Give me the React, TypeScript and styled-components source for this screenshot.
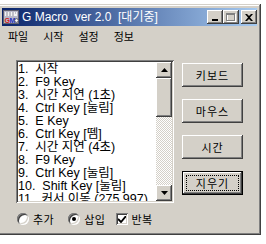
import React from "react";
import styled, { createGlobalStyle, css } from "styled-components";

const GlobalStyle = createGlobalStyle`
  html, body { margin: 0; padding: 0; background: #ffffff; }
  body { font-family: "Liberation Sans", "Noto Sans CJK KR", sans-serif; }
`;

const raised = css`
  box-shadow: inset -1px -1px #404040, inset 1px 1px #ffffff,
    inset -2px -2px #808080, inset 2px 2px #d4d0c8;
`;

const Window = styled.div`
  box-sizing: border-box;
  width: 263px;
  height: 231px;
  margin: 4px 0 0 -2px;
  padding: 4px;
  background: #d4d0c8;
  box-shadow: inset -1px -1px #404040, inset 1px 1px #d4d0c8,
    inset -2px -2px #808080, inset 2px 2px #ffffff;
  display: flex;
  flex-direction: column;
`;

const TitleBar = styled.div`
  height: 18px;
  display: flex;
  align-items: center;
  padding: 0 0 0 1px;
  background: linear-gradient(to right, #0a246a, #a6caf0);
`;

const TitleText = styled.span`
  flex: 1;
  margin-left: 3px;
  color: #ffffff;
  font-size: 12px;
  line-height: 18px;
  white-space: pre;
`;

const Controls = styled.div`
  display: flex;
  align-items: center;
`;

const TitleButton = styled.div<{ $gap?: boolean }>`
  width: 16px;
  height: 14px;
  margin-left: ${(p) => (p.$gap ? "2px" : "0")};
  background: #d4d0c8;
  ${raised};
  display: flex;
  align-items: center;
  justify-content: center;
`;

const MenuBar = styled.div`
  height: 19px;
  display: flex;
  align-items: center;
  gap: 15px;
  padding-left: 6px;
`;

const MenuItem = styled.span`
  font-family: "Noto Sans CJK KR", sans-serif;
  font-size: 11px;
  color: #000;
`;

const Client = styled.div`
  flex: 1;
  display: flex;
  flex-direction: column;
  padding: 15px 0 0 14px;
`;

const MainRow = styled.div`
  display: flex;
  gap: 8px;
`;

const ListBox = styled.div`
  box-sizing: border-box;
  width: 158px;
  height: 143px;
  padding: 2px;
  background: #ffffff;
  box-shadow: inset 1px 1px #808080, inset -1px -1px #ffffff,
    inset 2px 2px #404040, inset -2px -2px #d4d0c8;
  display: flex;
`;

const Items = styled.div`
  flex: 1;
  overflow: hidden;
  padding-top: 1px;
`;

const Item = styled.div`
  font-size: 12.5px;
  line-height: 13px;
  height: 13px;
  color: #000;
  white-space: pre;
`;

const ScrollBar = styled.div`
  width: 16px;
  display: flex;
  flex-direction: column;
`;

const ScrollButton = styled.div`
  width: 16px;
  height: 16px;
  background: #d4d0c8;
  ${raised};
  display: flex;
  align-items: center;
  justify-content: center;
`;

const Thumb = styled.div`
  width: 16px;
  height: 39px;
  background: #d4d0c8;
  ${raised};
`;

const Track = styled.div`
  flex: 1;
  background-color: #ffffff;
  background-image: conic-gradient(#d4d0c8 25%, #ffffff 0 50%, #d4d0c8 0 75%, #ffffff 0);
  background-size: 2px 2px;
`;

const ButtonColumn = styled.div`
  display: flex;
  flex-direction: column;
  gap: 12px;
  padding-top: 3px;
`;

const PushButton = styled.div<{ $default?: boolean }>`
  position: relative;
  box-sizing: border-box;
  width: 61px;
  height: 24px;
  background: #d4d0c8;
  font-family: "Noto Sans CJK KR", sans-serif;
  font-size: 11px;
  color: #000;
  display: flex;
  align-items: center;
  justify-content: center;
  letter-spacing: 1px;
  ${(p) =>
    p.$default
      ? css`
          border: 1px solid #000;
          box-shadow: inset -1px -1px #404040, inset 1px 1px #ffffff,
            inset -2px -2px #808080, inset 2px 2px #d4d0c8;
        `
      : raised};
`;

const FocusRing = styled.span`
  position: absolute;
  inset: 3px;
  border: 1px dotted #000;
`;

const BottomRow = styled.div`
  display: flex;
  align-items: center;
  height: 16px;
  margin-top: 8px;
  padding-left: 1px;
`;

const Option = styled.label<{ $gap: number }>`
  display: flex;
  align-items: center;
  margin-right: ${(p) => p.$gap}px;
  font-family: "Noto Sans CJK KR", sans-serif;
  font-size: 11px;
  color: #000;
  letter-spacing: 0.5px;
`;

const Radio = styled.span<{ $on?: boolean }>`
  box-sizing: border-box;
  width: 12px;
  height: 12px;
  border-radius: 50%;
  background: #ffffff;
  box-shadow: inset 1px 1px #808080, inset -1px -1px #ffffff,
    inset 2px 2px #404040, inset -2px -2px #d4d0c8;
  margin-right: 4px;
  display: flex;
  align-items: center;
  justify-content: center;
  &::after {
    content: "";
    width: 4px;
    height: 4px;
    border-radius: 50%;
    background: ${(p) => (p.$on ? "#000" : "transparent")};
  }
`;

const Check = styled.span`
  box-sizing: border-box;
  width: 12px;
  height: 12px;
  background: #ffffff;
  box-shadow: inset 1px 1px #808080, inset -1px -1px #ffffff,
    inset 2px 2px #404040, inset -2px -2px #d4d0c8;
  margin-right: 4px;
  display: flex;
  align-items: center;
  justify-content: center;
`;

const items = [
  "1.  시작",
  "2.  F9 Key",
  "3.  시간 지연 (1초)",
  "4.  Ctrl Key [눌림]",
  "5.  E Key",
  "6.  Ctrl Key [뗌]",
  "7.  시간 지연 (4초)",
  "8.  F9 Key",
  "9.  Ctrl Key [눌림]",
  "10.  Shift Key [눌림]",
  "11.  커서 이동 (275,997)",
];

const AppIcon = () => (
  <svg width="16" height="16" viewBox="0 0 16 16">
    <rect x="0.5" y="1.5" width="15" height="13" fill="#b8b8c8" stroke="#606070" />
    <rect x="2" y="3" width="12" height="4" fill="#f4f4f4" />
    <path d="M3 4h2M6 4h2M9 4h2M12 4h1M3 6h2M6 6h2M9 6h2" stroke="#8a8a9a" strokeWidth="1" />
    <text x="1.5" y="13.5" fontSize="7" fontWeight="bold" fill="#d02020" fontFamily="Liberation Sans">G</text>
    <text x="6.5" y="13.5" fontSize="7" fontWeight="bold" fill="#2030c0" fontFamily="Liberation Sans">M</text>
    <circle cx="13.5" cy="11.5" r="1.8" fill="#fff" stroke="#404050" strokeWidth="0.8" />
  </svg>
);

export default function App() {
  return (
    <>
      <GlobalStyle />
      <Window>
        <TitleBar>
          <AppIcon />
          <TitleText>{"G Macro  ver 2.0  [대기중]"}</TitleText>
          <Controls>
            <TitleButton>
              <svg width="8" height="7" viewBox="0 0 8 7">
                <rect x="1" y="5" width="6" height="2" fill="#000" />
              </svg>
            </TitleButton>
            <TitleButton>
              <svg width="10" height="9" viewBox="0 0 10 9">
                <rect x="1.5" y="1.5" width="8" height="7" fill="none" stroke="#fff" />
                <rect x="0.5" y="0.5" width="8" height="7" fill="none" stroke="#808080" />
                <line x1="1" y1="1.5" x2="8" y2="1.5" stroke="#808080" />
              </svg>
            </TitleButton>
            <TitleButton $gap>
              <svg width="8" height="7" viewBox="0 0 8 7">
                <path d="M0 0h2l2 2 2-2h2v0L5 3.5 8 7H6L4 5 2 7H0l3-3.5z" fill="#000" />
              </svg>
            </TitleButton>
          </Controls>
        </TitleBar>
        <MenuBar>
          <MenuItem>파일</MenuItem>
          <MenuItem>시작</MenuItem>
          <MenuItem>설정</MenuItem>
          <MenuItem>정보</MenuItem>
        </MenuBar>
        <Client>
          <MainRow>
            <ListBox>
              <Items>
                {items.map((t) => (
                  <Item key={t}>{t}</Item>
                ))}
              </Items>
              <ScrollBar>
                <ScrollButton>
                  <svg width="7" height="4" viewBox="0 0 7 4">
                    <path d="M3.5 0L7 4H0z" fill="#000" />
                  </svg>
                </ScrollButton>
                <Thumb />
                <Track />
                <ScrollButton>
                  <svg width="7" height="4" viewBox="0 0 7 4">
                    <path d="M0 0h7L3.5 4z" fill="#000" />
                  </svg>
                </ScrollButton>
              </ScrollBar>
            </ListBox>
            <ButtonColumn>
              <PushButton>키보드</PushButton>
              <PushButton>마우스</PushButton>
              <PushButton>시간</PushButton>
              <PushButton $default>
                지우기
                <FocusRing />
              </PushButton>
            </ButtonColumn>
          </MainRow>
          <BottomRow>
            <Option $gap={14}>
              <Radio />
              추가
            </Option>
            <Option $gap={10}>
              <Radio $on />
              삽입
            </Option>
            <Option $gap={0}>
              <Check>
                <svg width="8" height="7" viewBox="0 0 8 7">
                  <path d="M0 3l3 3 5-6" fill="none" stroke="#000" strokeWidth="1.8" />
                </svg>
              </Check>
              반복
            </Option>
          </BottomRow>
        </Client>
      </Window>
    </>
  );
}
